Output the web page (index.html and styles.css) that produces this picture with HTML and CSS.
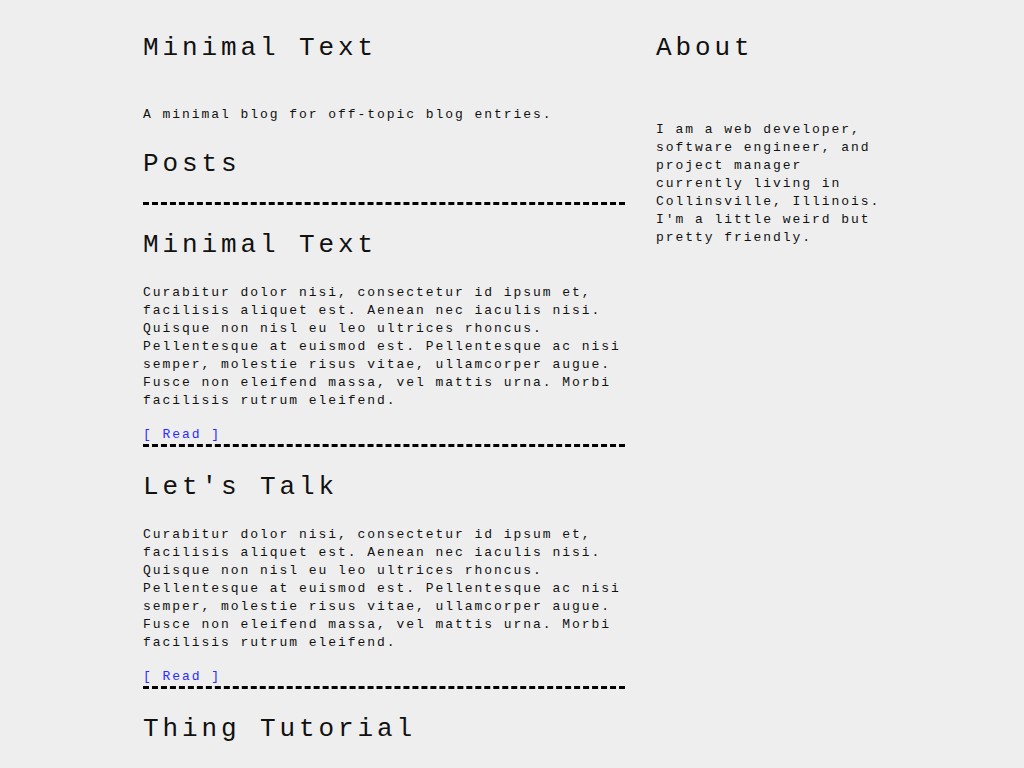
FILE: index.html
```html
<!DOCTYPE html>
<html lang="en">
<head>
<meta charset="utf-8">
<title>Minimal Text</title>
<link rel="stylesheet" href="styles.css">
</head>
<body>
<div class="page">
  <main class="main">
    <h1 class="title">Minimal Text</h1>
    <p class="tagline">A minimal blog for off-topic blog entries.</p>
    <h1 class="section-title">Posts</h1>
    <article class="post">
      <h1 class="post-title">Minimal Text</h1>
      <p class="post-body">Curabitur dolor nisi, consectetur id ipsum et, facilisis aliquet est. Aenean nec iaculis nisi. Quisque non nisl eu leo ultrices rhoncus. Pellentesque at euismod est. Pellentesque ac nisi semper, molestie risus vitae, ullamcorper augue. Fusce non eleifend massa, vel mattis urna. Morbi facilisis rutrum eleifend.</p>
      <a class="read" href="#">[ Read ]</a>
    </article>
    <article class="post">
      <h1 class="post-title">Let's Talk</h1>
      <p class="post-body">Curabitur dolor nisi, consectetur id ipsum et, facilisis aliquet est. Aenean nec iaculis nisi. Quisque non nisl eu leo ultrices rhoncus. Pellentesque at euismod est. Pellentesque ac nisi semper, molestie risus vitae, ullamcorper augue. Fusce non eleifend massa, vel mattis urna. Morbi facilisis rutrum eleifend.</p>
      <a class="read" href="#">[ Read ]</a>
    </article>
    <article class="post">
      <h1 class="post-title">Thing Tutorial</h1>
      <p class="post-body">Curabitur dolor nisi, consectetur id ipsum et, facilisis aliquet est. Aenean nec iaculis nisi. Quisque non nisl eu leo ultrices rhoncus. Pellentesque at euismod est. Pellentesque ac nisi semper, molestie risus vitae, ullamcorper augue. Fusce non eleifend massa, vel mattis urna. Morbi facilisis rutrum eleifend.</p>
      <a class="read" href="#">[ Read ]</a>
    </article>
  </main>
  <aside class="sidebar">
    <h1 class="title">About</h1>
    <p class="about">I am a web developer, software engineer, and project manager currently living in Collinsville, Illinois. I'm a little weird but pretty friendly.</p>
  </aside>
</div>
</body>
</html>
```
FILE: styles.css
```css
html, body {
  margin: 0;
  padding: 0;
  background: #eeeeee;
}

body {
  font-family: "Liberation Mono", "Courier New", monospace;
  font-size: 13px;
  line-height: 18px;
  letter-spacing: 0.15em;
  color: #111;
}

.page {
  display: flex;
  gap: 31px;
  width: 738px;
  margin: 0 auto;
  padding-top: 32px;
}

.main {
  width: 482px;
  flex: none;
}

.sidebar {
  width: 225px;
  flex: none;
}

h1 {
  font-size: 26px;
  line-height: 32px;
  letter-spacing: 0.15em;
  font-weight: normal;
  margin: 0;
}

p {
  margin: 0;
}

.tagline {
  margin-top: 42px;
}

.section-title {
  margin-top: 24px;
  margin-bottom: 22px;
}

.post {
  border-top: 3px dashed #000;
  padding-top: 24px;
}

.post-title {
  margin-bottom: 23px;
}

.post-body {
  margin-bottom: 16px;
}

.read {
  display: block;
  color: #2b2bff;
  text-decoration: none;
}

.about {
  margin-top: 57px;
}
```
